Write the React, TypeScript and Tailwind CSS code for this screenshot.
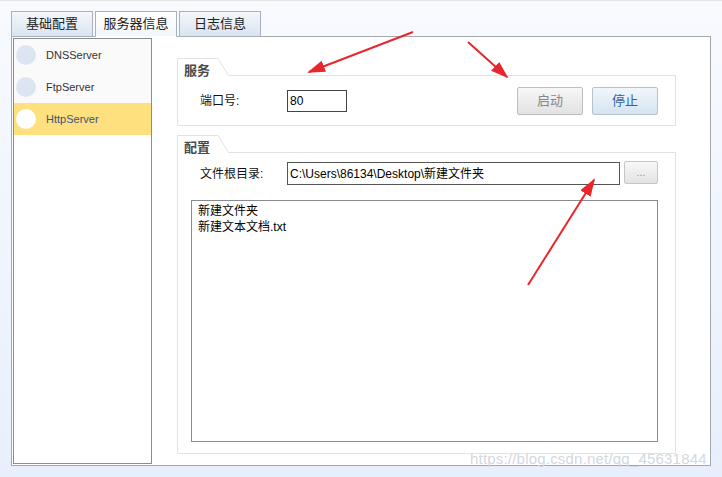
import React from "react";

const FONT = { fontFamily: '"Liberation Sans", "Noto Sans CJK SC", sans-serif' };

const servers = ["DNSServer", "FtpServer", "HttpServer"];

function Tab({ label, active }: { label: string; active?: boolean }) {
  return (
    <div
      className={
        "w-[82px] h-[26px] flex items-center justify-center text-[13px] text-[#222] border border-[#aab1ba] " +
        (active
          ? "bg-gradient-to-b from-white to-[#f3f6fa] border-b-white relative z-10"
          : "bg-gradient-to-b from-[#f4f7fb] to-[#d9e4f1]")
      }
    >
      {label}
    </div>
  );
}

function GroupBox({ title, children, boxClass }: { title: string; children: React.ReactNode; boxClass: string }) {
  return (
    <div className="flex flex-col">
      <div className="relative w-[52px] h-[18px] -mb-px z-10">
        <svg className="absolute inset-0" width="52" height="18" viewBox="0 0 52 18">
          <path d="M0.5 18 V0.5 H41 L51.5 17.5 V18 H0.5 Z" fill="white" />
          <path d="M0.5 18 V0.5 H41 L51.5 17.5" fill="none" stroke="#e2e2e2" />
        </svg>
        <span className="relative pl-[7px] leading-[20px] text-[13px] font-bold text-[#4a4a4a]">{title}</span>
      </div>
      <div className={"border border-[#e2e2e2] bg-white " + boxClass}>{children}</div>
    </div>
  );
}

export default function App() {
  return (
    <div
      className="relative w-[722px] h-[477px] overflow-hidden border-t border-[#e4e4e4] bg-gradient-to-b from-[#f8faff] to-[#e8effc] pt-[10px] pl-[11px]"
      style={FONT}
    >
      {/* Tabs */}
      <div className="flex gap-[2px]">
        <Tab label="基础配置" />
        <Tab label="服务器信息" active />
        <Tab label="日志信息" />
      </div>

      {/* Panel */}
      <div className="-mt-px w-[700px] h-[430px] border border-[#a4a7ab] bg-white flex p-px">
        {/* Server list */}
        <div className="w-[139px] h-[426px] border border-[#8a8d92] bg-white flex flex-col">
          {servers.map((s, i) => {
            const sel = i === 2;
            return (
              <div
                key={s}
                className={
                  "h-[32px] flex items-center gap-[10px] pl-[2px] " + (sel ? "bg-[#ffe07e]" : "bg-[#fafafa]")
                }
              >
                <div className={"w-[20px] h-[20px] rounded-full " + (sel ? "bg-white" : "bg-[#dde6f0]")} />
                <span className={"text-[11px] " + (sel ? "text-[#3b5478]" : "text-[#333]")}>{s}</span>
              </div>
            );
          })}
        </div>

        {/* Content */}
        <div className="flex flex-col gap-[9px] pt-[20px] pl-[25px]">
          <GroupBox title="服务" boxClass="w-[499px] h-[51px] flex items-center pl-[22px] pr-[17px]">
            <span className="w-[87px] text-[12px] text-[#111]">端口号:</span>
            <div className="w-[60px] h-[22px] border border-[#444] flex items-center pl-[2px] text-[12px] text-black">
              80
            </div>
            <div className="ml-auto flex gap-[9px]">
              <button className="w-[66px] h-[28px] rounded-[2px] border border-[#bdbdbd] bg-gradient-to-b from-[#f7f7f7] to-[#e2e2e2] text-[13px] text-[#888]">
                启动
              </button>
              <button className="w-[66px] h-[28px] rounded-[2px] border border-[#b8c2cc] bg-gradient-to-b from-[#f1f6fb] to-[#d5e4f2] text-[13px] text-[#2e5f9e]">
                停止
              </button>
            </div>
          </GroupBox>

          <GroupBox title="配置" boxClass="w-[499px] h-[302px] flex flex-col pt-[9px] pl-[13px] pr-[16px]">
            <div className="flex items-start pl-[9px]">
              <span className="w-[87px] h-[23px] flex items-center text-[12px] text-[#111]">文件根目录:</span>
              <div className="w-[333px] h-[23px] border border-[#555] flex items-center pl-[2px] text-[12px] text-black">
                C:\Users\86134\Desktop\新建文件夹
              </div>
              <button className="ml-[4px] -mt-px w-[34px] h-[23px] rounded-[2px] border border-[#c6c6c6] bg-gradient-to-b from-[#f8f8f8] to-[#e3e3e3] text-[11px] text-[#999] leading-none">
                ...
              </button>
            </div>
            <div className="mt-[15px] w-[467px] h-[242px] border border-[#8a8a90] pt-[2px] pl-[6px] text-[12px] leading-[16px] text-black">
              <div>新建文件夹</div>
              <div>新建文本文档.txt</div>
            </div>
          </GroupBox>
        </div>
      </div>

      {/* Watermark */}
      <div className="absolute left-[470px] top-[447px] text-[15px] text-[#d3d8df] tracking-[0.2px]">
        https://blog.csdn.net/qq_45631844
      </div>

      {/* Annotation arrows */}
      <svg className="absolute inset-0 pointer-events-none" width="722" height="477">
        <defs>
          <marker id="ah" markerWidth="9" markerHeight="6" refX="8" refY="3" orient="auto" markerUnits="strokeWidth">
            <path d="M0 0 L9 3 L0 6 Z" fill="#e8262b" />
          </marker>
        </defs>
        <line x1="413" y1="31" x2="309" y2="71" stroke="#e8262b" strokeWidth="2" markerEnd="url(#ah)" />
        <line x1="468" y1="41" x2="507" y2="76" stroke="#e8262b" strokeWidth="2" markerEnd="url(#ah)" />
        <line x1="528" y1="284" x2="594" y2="179" stroke="#e8262b" strokeWidth="2" markerEnd="url(#ah)" />
      </svg>
    </div>
  );
}
